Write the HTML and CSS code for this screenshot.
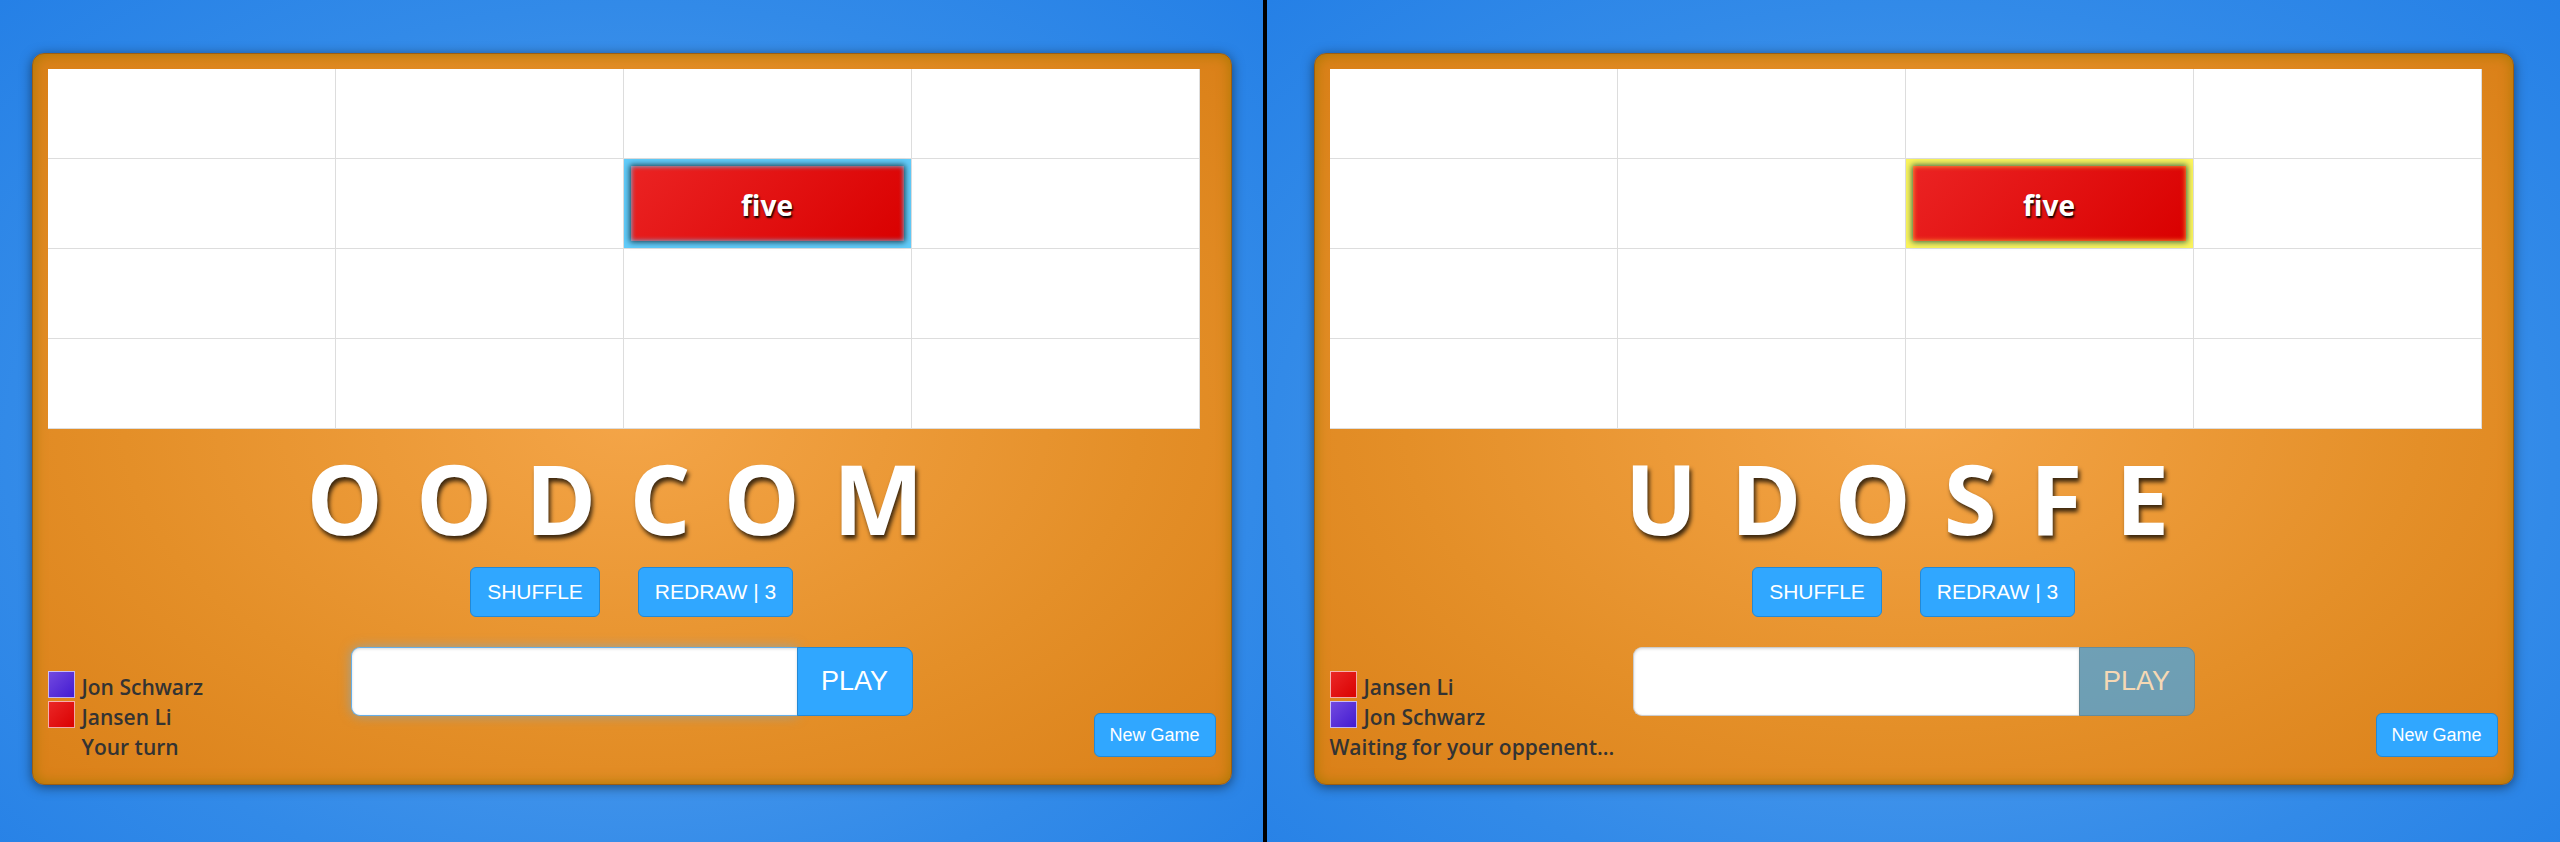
FILE: index.html
```html
<!DOCTYPE html>
<html lang="en">
<head>
<meta charset="utf-8">
<meta name="viewport" content="width=device-width, initial-scale=1">
<title>Word Game</title>
<link rel="stylesheet" href="styles.css">
</head>
<body>
<main class="screens">
  <section class="screen">
    <div class="panel">
      <div class="board">
        <div class="cell"></div><div class="cell"></div><div class="cell"></div><div class="cell"></div>
        <div class="cell"></div><div class="cell"></div><div class="cell cell-mine"><div class="tile">five</div></div><div class="cell"></div>
        <div class="cell"></div><div class="cell"></div><div class="cell"></div><div class="cell"></div>
        <div class="cell"></div><div class="cell"></div><div class="cell"></div><div class="cell"></div>
      </div>
      <div class="letters">
        <span>O</span><span>O</span><span>D</span><span>C</span><span>O</span><span>M</span>
      </div>
      <div class="actions">
        <button class="btn btn-shuffle" type="button">SHUFFLE</button>
        <button class="btn btn-redraw" type="button">REDRAW | 3</button>
      </div>
      <div class="footer">
        <div class="players">
          <div class="player"><span class="swatch swatch-purple"></span>Jon Schwarz</div>
          <div class="player"><span class="swatch swatch-red"></span>Jansen Li</div>
          <div class="player player-status">Your turn</div>
        </div>
        <form class="play">
          <input class="word word-active" type="text" aria-label="Your word">
          <button class="btn btn-play" type="button">PLAY</button>
        </form>
        <button class="btn btn-new" type="button">New Game</button>
      </div>
    </div>
  </section>
  <section class="screen">
    <div class="panel">
      <div class="board">
        <div class="cell"></div><div class="cell"></div><div class="cell"></div><div class="cell"></div>
        <div class="cell"></div><div class="cell"></div><div class="cell cell-theirs"><div class="tile">five</div></div><div class="cell"></div>
        <div class="cell"></div><div class="cell"></div><div class="cell"></div><div class="cell"></div>
        <div class="cell"></div><div class="cell"></div><div class="cell"></div><div class="cell"></div>
      </div>
      <div class="letters">
        <span>U</span><span>D</span><span>O</span><span>S</span><span>F</span><span>E</span>
      </div>
      <div class="actions">
        <button class="btn btn-shuffle" type="button">SHUFFLE</button>
        <button class="btn btn-redraw" type="button">REDRAW | 3</button>
      </div>
      <div class="footer">
        <div class="players">
          <div class="player"><span class="swatch swatch-red"></span>Jansen Li</div>
          <div class="player"><span class="swatch swatch-purple"></span>Jon Schwarz</div>
          <div class="player">Waiting for your oppenent...</div>
        </div>
        <form class="play">
          <input class="word" type="text" aria-label="Your word">
          <button class="btn btn-play" type="button" disabled>PLAY</button>
        </form>
        <button class="btn btn-new" type="button">New Game</button>
      </div>
    </div>
  </section>
</main>
</body>
</html>
```
FILE: styles.css
```css
* {
  box-sizing: border-box;
}

body {
  margin: 0;
  background: #000;
  color: #333;
  font-family: "Open Sans", "Noto Sans", sans-serif;
}

.screens {
  display: grid;
  grid-template-columns: 1263fr 1293fr;
  column-gap: 4px;
  min-height: 100vh;
}

.screen {
  display: flex;
  justify-content: center;
  align-items: flex-start;
  padding: 53px 16px 57px;
  background: radial-gradient(ellipse at 50% 54%, #5fa6f0 0%, #328ae8 70%, #2580e6 100%);
}

.panel {
  flex: 1;
  max-width: 1200px;
  padding: 15px 15px 23px;
  border: 1px solid #9a5d14;
  border-radius: 12px;
  background: radial-gradient(ellipse at center, #f4a548 0%, #e48f28 60%, #da8018 100%);
  box-shadow: 0 2px 12px rgba(0, 0, 0, 0.5), inset 0 0 14px #a87800;
}

.board {
  display: grid;
  grid-template-columns: repeat(4, 1fr);
  grid-auto-rows: 90px;
  margin-right: 16px;
  background: #fff;
}

.cell {
  padding: 7px;
  border-right: 1px solid #ddd;
  border-bottom: 1px solid #ddd;
}

.cell-mine {
  background: #62cdfb;
}

.cell-theirs {
  background: #fbf45c;
}

.tile {
  display: flex;
  align-items: center;
  justify-content: center;
  height: 100%;
  padding-top: 2px;
  background: linear-gradient(135deg, #eb2323, #d90000);
  color: #fff;
  font-size: 28px;
  font-weight: 700;
  line-height: 40px;
  text-shadow: 1px 2px 2px #000;
}

.cell-mine .tile {
  box-shadow: 0 0 6px 1px #1a3a48, inset 0 0 5px #62cdfb;
}

.cell-theirs .tile {
  box-shadow: 0 0 6px 1px #34604c, inset 0 0 5px #fbb03c;
}

.letters {
  display: flex;
  justify-content: center;
  padding-top: 17px;
  color: #fff;
  font-size: 96px;
  font-weight: 700;
  line-height: 104px;
  text-shadow: 2px 4px 4px rgba(0, 0, 0, 0.75);
}

.letters span {
  margin-right: 33px;
}

.actions {
  display: flex;
  justify-content: center;
  gap: 38px;
  padding-top: 17px;
}

.btn {
  height: 50px;
  padding: 0;
  border: 1px solid #2389d6;
  border-radius: 6px;
  background: #30a7ff;
  color: #fff;
  font-family: "Liberation Sans", Arial, sans-serif;
  font-size: 21px;
}

.btn-shuffle {
  width: 130px;
}

.btn-redraw {
  width: 155px;
}

.footer {
  display: grid;
  grid-template-columns: 1fr auto 1fr;
  padding-top: 30px;
}

.players {
  padding-top: 24px;
  font-size: 21px;
  font-weight: 600;
  line-height: 32px;
  white-space: nowrap;
}

.player {
  display: flex;
  height: 30px;
}

.player-status {
  padding-left: 34px;
}

.swatch {
  width: 27px;
  height: 27px;
  margin-right: 7px;
  border: 1px solid rgba(255, 255, 255, 0.65);
}

.swatch-purple {
  background: linear-gradient(135deg, #744be0, #4119d0) border-box;
}

.swatch-red {
  background: linear-gradient(135deg, #eb2828, #d90000) border-box;
}

.play {
  display: flex;
  align-items: flex-start;
}

.word {
  width: 446px;
  height: 69px;
  padding: 8px 16px;
  border: 1px solid #ccc;
  border-right: 0;
  border-radius: 9px 0 0 9px;
  outline: none;
  background: #fff;
  box-shadow: inset 0 1px 3px rgba(0, 0, 0, 0.15);
  font-size: 28px;
}

.word-active {
  border-color: #66afe9;
  box-shadow: inset 0 1px 3px rgba(0, 0, 0, 0.15), 0 0 12px rgba(102, 175, 233, 0.6);
}

.btn-play {
  z-index: 1;
  width: 116px;
  height: 69px;
  border-radius: 0 9px 9px 0;
  font-size: 27px;
}

.btn-play:disabled {
  opacity: 0.65;
}

.btn-new {
  justify-self: end;
  align-self: end;
  width: 122px;
  height: 44px;
  margin-bottom: 4px;
  font-size: 18px;
}
```
